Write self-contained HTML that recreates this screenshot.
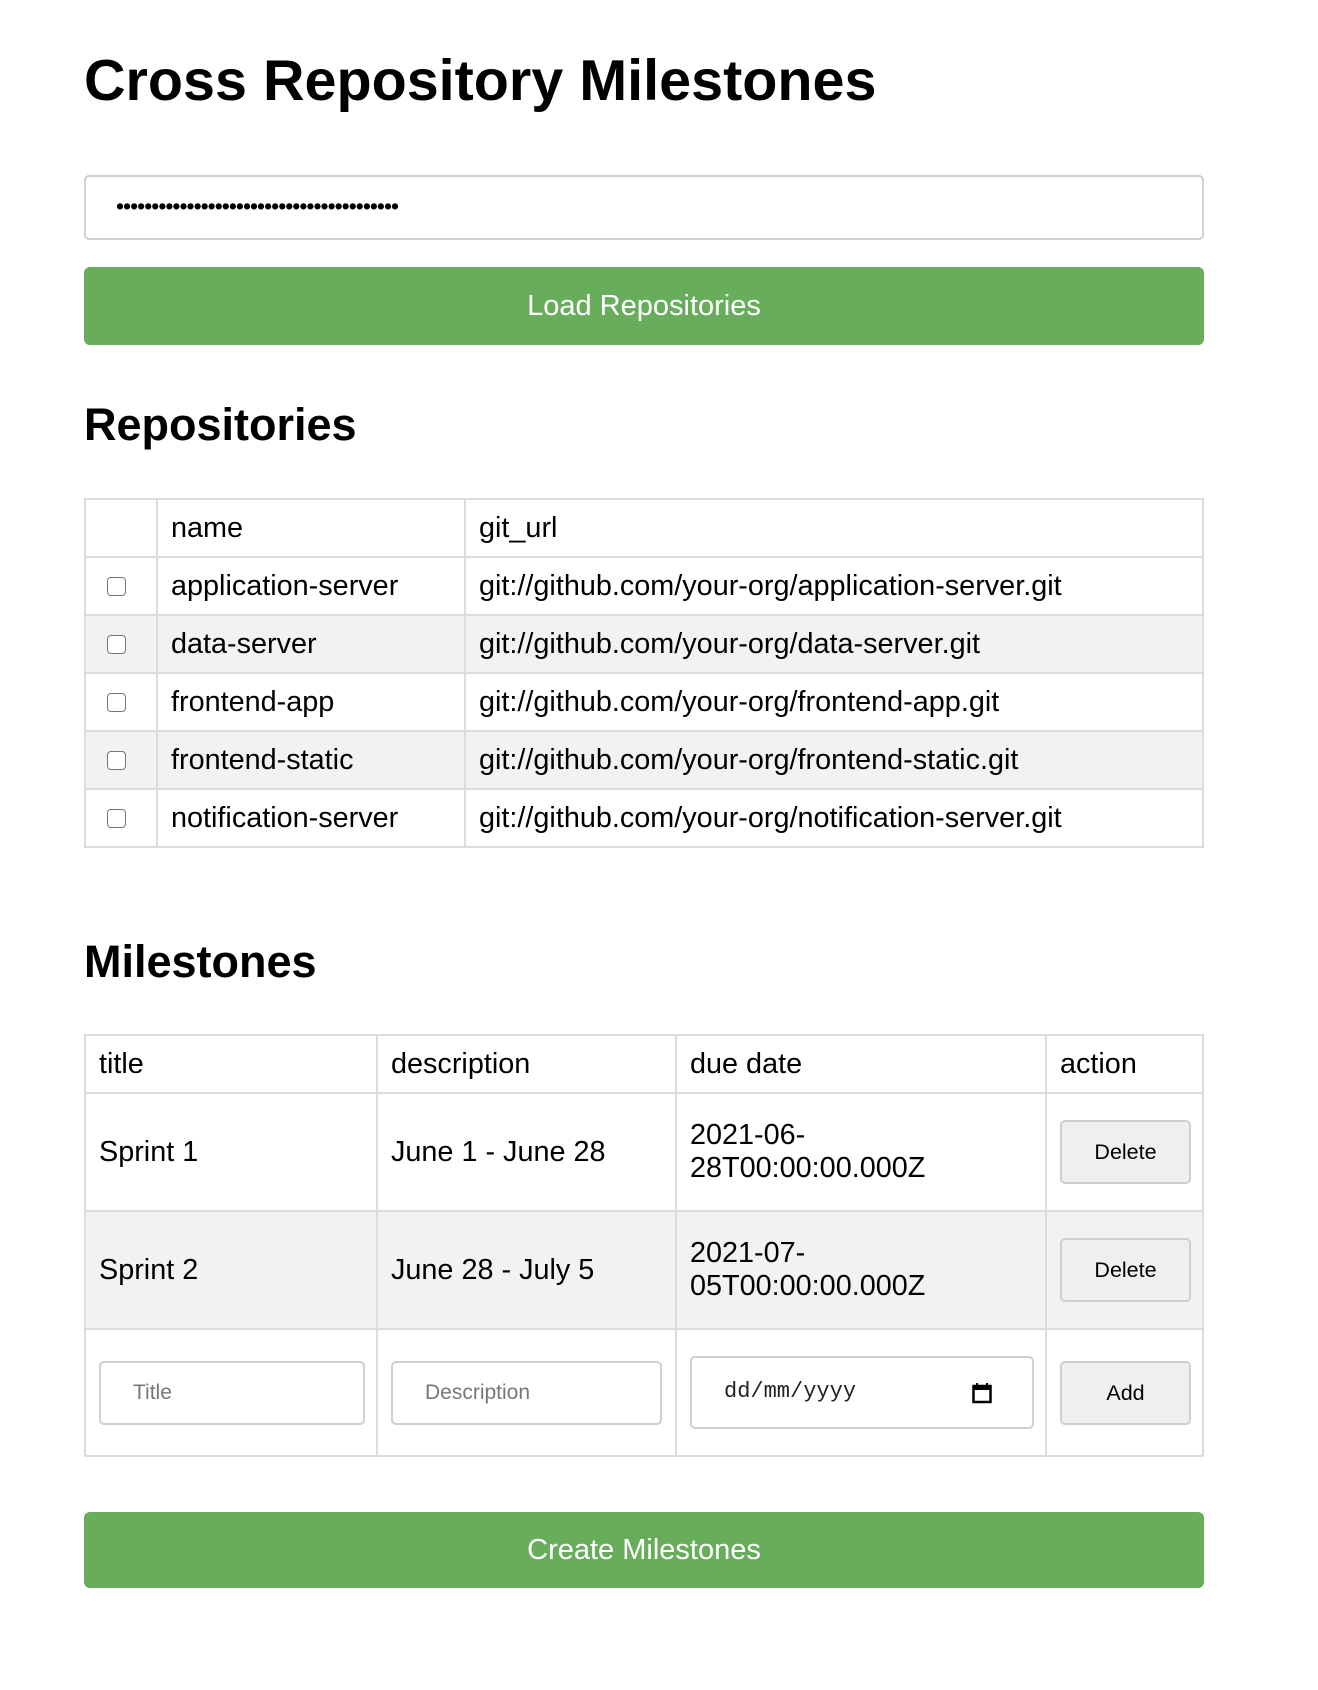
<!DOCTYPE html>
<html><head><meta charset="utf-8"><style>
*{box-sizing:border-box;margin:0;padding:0}
body{width:1318px;height:1690px;background:#fff;font-family:"Liberation Sans",Arial,sans-serif;color:#000;position:relative;overflow:hidden}
.a{position:absolute}
h1{position:absolute;left:84px;top:46px;font-size:57.5px;line-height:70px;font-weight:bold}
h2{position:absolute;left:84px;font-size:45px;line-height:52px;font-weight:bold}
.inp{left:84px;top:175px;width:1120px;height:65px;border:2px solid #d0d0d0;border-radius:5px;font-size:23px;padding-left:30px;line-height:58px;letter-spacing:-1px}
.btn{left:84px;width:1120px;background:#67ad5c;border-radius:6px;color:#fff;font-size:29px;text-align:center}
table{position:absolute;left:84px;width:1120px;border-collapse:collapse;font-size:28.8px;table-layout:fixed}
td{border:2px solid #dcdcdc;padding:0 13px;vertical-align:middle;white-space:nowrap}
.g td{background:#f2f2f2}
.cb{width:19px;height:19px;border:1.5px solid #767676;border-radius:4px;margin-left:8px;background:#fff}
.gb{display:block;height:64px;background:#efefef;border:2px solid #cfcfcf;border-radius:5px;font-size:21.5px;text-align:center;line-height:60px;width:131px}
.ph{height:64px;border:2px solid #cfcfcf;border-radius:5px;font-size:21px;color:#777;padding-left:32px;line-height:60px}
</style></head><body>
<h1>Cross Repository Milestones</h1>
<div class="a inp">••••••••••••••••••••••••••••••••••••••••</div>
<div class="a btn" style="top:267px;height:78px;line-height:78px">Load Repositories</div>
<h2 style="top:399px">Repositories</h2>
<table style="top:498px">
<colgroup><col style="width:72px"><col style="width:308px"><col></colgroup>
<tr style="height:58px"><td></td><td>name</td><td>git_url</td></tr>
<tr style="height:58px"><td><div class="cb"></div></td><td>application-server</td><td>git://github.com/your-org/application-server.git</td></tr>
<tr style="height:58px" class="g"><td><div class="cb"></div></td><td>data-server</td><td>git://github.com/your-org/data-server.git</td></tr>
<tr style="height:58px"><td><div class="cb"></div></td><td>frontend-app</td><td>git://github.com/your-org/frontend-app.git</td></tr>
<tr style="height:58px" class="g"><td><div class="cb"></div></td><td>frontend-static</td><td>git://github.com/your-org/frontend-static.git</td></tr>
<tr style="height:58px"><td><div class="cb"></div></td><td>notification-server</td><td>git://github.com/your-org/notification-server.git</td></tr>
</table>
<h2 style="top:936px">Milestones</h2>
<table style="top:1034px">
<colgroup><col style="width:292px"><col style="width:299px"><col style="width:370px"><col></colgroup>
<tr style="height:58px"><td>title</td><td>description</td><td>due date</td><td>action</td></tr>
<tr style="height:118px"><td>Sprint 1</td><td>June 1 - June 28</td><td style="line-height:33px">2021-06-<br>28T00:00:00.000Z</td><td><span class="gb">Delete</span></td></tr>
<tr style="height:118px" class="g"><td>Sprint 2</td><td>June 28 - July 5</td><td style="line-height:33px">2021-07-<br>05T00:00:00.000Z</td><td><span class="gb">Delete</span></td></tr>
<tr style="height:127px"><td><div class="ph" style="width:266px">Title</div></td><td><div class="ph" style="width:271px">Description</div></td><td><div class="ph" style="width:344px;height:73px;line-height:68px;color:#222;font-family:'Liberation Mono',monospace;font-size:22px;position:relative">dd/mm/yyyy<svg style="position:absolute;right:40px;top:24px" width="20" height="22" viewBox="0 0 20 22"><rect x="1.5" y="4" width="17" height="16" fill="none" stroke="#000" stroke-width="2.5"/><rect x="1.5" y="4" width="17" height="4" fill="#000"/><rect x="4" y="1" width="2" height="4" fill="#000"/><rect x="14" y="1" width="2" height="4" fill="#000"/></svg></div></td><td><span class="gb">Add</span></td></tr>
</table>
<div class="a btn" style="top:1512px;height:76px;line-height:76px">Create Milestones</div>
</body></html>
